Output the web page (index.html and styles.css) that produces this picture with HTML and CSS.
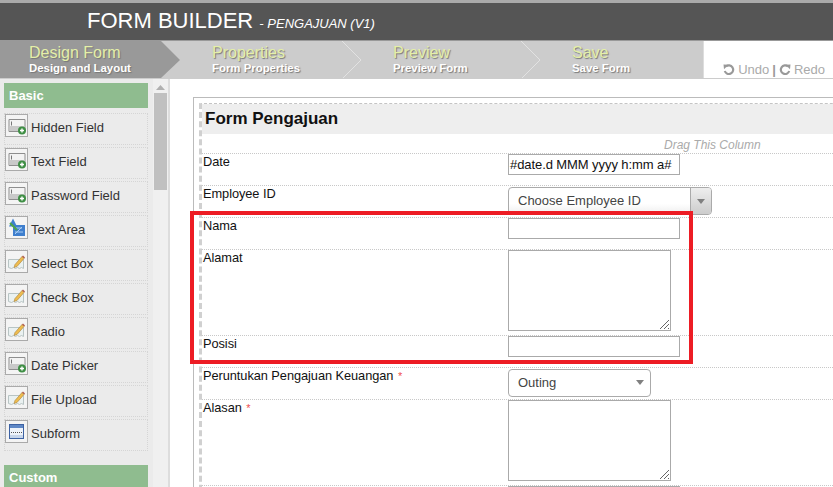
FILE: index.html
```html
<!DOCTYPE html>
<html lang="id">
<head>
<meta charset="utf-8">
<title>Form Builder</title>
<link rel="stylesheet" href="styles.css">
</head>
<body>
<svg class="defs" width="0" height="0" aria-hidden="true">
  <symbol id="i-field" viewBox="0 0 21 21">
    <path d="M3 4.500h16v12H3z" fill="#f3f3f3" stroke="#8e8e8e"/>
    <rect x="3.500" y="11" width="15" height="5" fill="#c9c9c9"/>
    <path d="M5.500 6.500v4" stroke="#777"/>
    <circle cx="16" cy="15.500" r="4" fill="#3f8f45"/>
    <path d="M14 15.500h4M16 13.500v4" stroke="#fff" stroke-width="1.400"/>
  </symbol>
  <symbol id="i-area" viewBox="0 0 21 21">
    <path d="M7 1.500l4 8H3z" fill="#3f7fce"/>
    <rect x="7" y="8" width="12" height="11" fill="#3f7fce"/>
    <path d="M9 17l7-7M10 11h6M9 15h8" stroke="#a9cdf3"/>
    <path d="M4 6l7 7" stroke="#4fa64a" stroke-width="2"/>
  </symbol>
  <symbol id="i-edit" viewBox="0 0 21 21">
    <path d="M2.500 8.500h15v9l-2-1-2 1-2-1-2 1-2-1-2 1-3-1z" fill="#eaf1f1" stroke="#b8c4c4"/>
    <path d="M9 13.500l7-8 2 2-7 8-3 1z" fill="#eebc4f" stroke="#a8823a" stroke-width=".6"/>
    <path d="M16 5.500l1-1 2 2-1 1z" fill="#b05a4a"/>
  </symbol>
  <symbol id="i-sub" viewBox="0 0 21 21">
    <rect x="3.500" y="3.500" width="14" height="14" fill="#eef3fa" stroke="#3d62a3"/>
    <rect x="4" y="4" width="13" height="3" fill="#5f88c6"/>
    <path d="M5 11.500h11" stroke="#555" stroke-dasharray="1 1"/>
    <rect x="4" y="14" width="13" height="3" fill="#c6d5ea"/>
  </symbol>
</svg>
<header class="title-bar">
  <h1 class="title">FORM BUILDER <small class="subtitle">- PENGAJUAN (V1)</small></h1>
</header>
<nav class="steps">
  <div class="step step-active step-a"><span class="step-title">Design Form</span><span class="step-sub">Design and Layout</span>
    <svg class="arrow arrow-active" width="19" height="37" viewBox="0 0 19 37"><path d="M0 0L19 19 0 37z" fill="#999"/></svg></div>
  <div class="step step-b"><span class="step-title">Properties</span><span class="step-sub">Form Properties</span>
    <svg class="arrow" width="20" height="37" viewBox="0 0 20 37"><path d="M0 0L19 19 1 37" fill="none" stroke="#e2e2e2"/></svg></div>
  <div class="step step-c"><span class="step-title">Preview</span><span class="step-sub">Preview Form</span>
    <svg class="arrow" width="20" height="37" viewBox="0 0 20 37"><path d="M0 0L19 19 1 37" fill="none" stroke="#e2e2e2"/></svg></div>
  <div class="step step-d"><span class="step-title">Save</span><span class="step-sub">Save Form</span></div>
  <div class="history">
    <svg width="12" height="12" viewBox="0 0 12 12"><path d="M3 2.500A4.300 4.300 0 1 1 1.800 7" fill="none" stroke="#999" stroke-width="2.200"/><path d="M.5 .5l5 .3L1 5.300z" fill="#999"/></svg>
    <span>Undo</span><b class="sep">|</b>
    <svg width="12" height="12" viewBox="0 0 12 12"><path d="M9 2.500A4.300 4.300 0 1 0 10.200 7" fill="none" stroke="#999" stroke-width="2.200"/><path d="M11.500 .5l-5 .3 4.500 4.500z" fill="#999"/></svg>
    <span>Redo</span>
  </div>
</nav>
<main class="workspace">
  <aside class="palette">
    <h2 class="group">Basic</h2>
    <div class="tool"><svg class="tool-icon"><use href="#i-field"/></svg>Hidden Field</div>
    <div class="tool"><svg class="tool-icon"><use href="#i-field"/></svg>Text Field</div>
    <div class="tool"><svg class="tool-icon"><use href="#i-field"/></svg>Password Field</div>
    <div class="tool"><svg class="tool-icon"><use href="#i-area"/></svg>Text Area</div>
    <div class="tool"><svg class="tool-icon"><use href="#i-edit"/></svg>Select Box</div>
    <div class="tool"><svg class="tool-icon"><use href="#i-edit"/></svg>Check Box</div>
    <div class="tool"><svg class="tool-icon"><use href="#i-edit"/></svg>Radio</div>
    <div class="tool"><svg class="tool-icon"><use href="#i-field"/></svg>Date Picker</div>
    <div class="tool"><svg class="tool-icon"><use href="#i-edit"/></svg>File Upload</div>
    <div class="tool"><svg class="tool-icon"><use href="#i-sub"/></svg>Subform</div>
    <h2 class="group group-custom">Custom</h2>
  </aside>
  <div class="scrollbar">
    <svg class="scroll-up" width="9" height="5" viewBox="0 0 9 5"><path d="M4.500 0L9 5H0z" fill="#b0b0b0"/></svg>
    <div class="thumb"></div>
  </div>
  <section class="canvas">
    <div class="form-outer">
      <div class="form-inner">
        <h2 class="form-title">Form Pengajuan</h2>
        <div class="drag-hint">Drag This Column</div>
        <div class="row row-32"><label class="lbl">Date</label><div class="input w172 value">#date.d MMM yyyy h:mm a#</div></div>
        <div class="row row-32"><label class="lbl">Employee ID</label>
          <div class="combo"><span class="combo-text">Choose Employee ID</span><span class="combo-btn"><i class="caret"></i></span></div></div>
        <div class="row row-32"><label class="lbl">Nama</label><div class="input w172"></div></div>
        <div class="row row-86"><label class="lbl">Alamat</label><div class="textarea"><svg class="grip" width="9" height="9" viewBox="0 0 9 9"><path d="M0 9L9 0M4 9l5-5M8 9l1-1" stroke="#666"/></svg></div></div>
        <div class="row row-32"><label class="lbl">Posisi</label><div class="input w172"></div></div>
        <div class="row row-32"><label class="lbl">Peruntukan Pengajuan Keuangan <em class="req">*</em></label>
          <div class="select-plain"><span>Outing</span><i class="caret"></i></div></div>
        <div class="row row-86"><label class="lbl">Alasan <em class="req">*</em></label><div class="textarea"><svg class="grip" width="9" height="9" viewBox="0 0 9 9"><path d="M0 9L9 0M4 9l5-5M8 9l1-1" stroke="#666"/></svg></div></div>
        <div class="row row-32"><label class="lbl"></label><div class="input w172"></div></div>
      </div>
    </div>
  </section>
</main>
<div class="highlight"></div>
</body>
</html>
```
FILE: styles.css
```css
* { box-sizing: border-box; }
html, body { margin: 0; height: 100%; overflow: hidden; }
body { font-family: "Liberation Sans", Arial, sans-serif; font-size: 12px; color: #222; background: #fff; position: relative; display: flex; flex-direction: column; height: 487px; }
.defs { position: absolute; }

.title-bar { height: 41px; flex: none; background: #555; border-top: 3px solid #aaa; border-bottom: 1px solid #999; padding-left: 87px; }
.title { margin: 0; font-size: 22px; font-weight: 400; line-height: 32px; padding-top: 2px; color: #fff; white-space: nowrap; }
.subtitle { font-size: 13px; font-style: italic; }

.steps { height: 38px; flex: none; display: flex; background: #ccc; border-bottom: 1px solid #ccc; }
.step { position: relative; padding: 3px 0 0 29px; display: flex; flex-direction: column; color: #fff; text-shadow: 1px 1px 1px #777; }
.step-a { width: 161px; background: #999; margin-right: 22px; }
.step-b { width: 159px; margin-right: 22px; }
.step-c { width: 157px; margin-right: 22px; }
.step-d { width: 160px; }
.step-title { font-size: 16px; line-height: 18px; color: #e4efa8; }
.step-sub { font-size: 11.400px; line-height: 13px; font-weight: 700; color: #fff; }
.arrow { position: absolute; top: 0; left: 100%; }
.history { flex: 1; background: #fff; border-left: 1px solid #ddd; display: flex; align-items: center; justify-content: flex-end; gap: 3px; padding: 20px 8px 0 0; color: #aaa; font-size: 13px; }
.sep { color: #999; }

.workspace { flex: 1; display: flex; min-height: 0; }
.palette { width: 153px; flex: none; background: #ebebeb; padding: 4px 5px 0 4px; overflow: hidden; }
.group { margin: 0 0 5px; height: 25px; background: #8fbc8f; color: #fff; font-size: 13px; line-height: 25px; padding-left: 5px; }
.group-custom { margin: 14px 0 0; }
.tool { height: 32px; margin: 0 0 2px; border: 1px dotted #d5d5d5; display: flex; align-items: flex-start; gap: 3px; font-size: 13px; line-height: 28px; color: #333; }
.tool-icon { width: 23px; height: 23px; flex: none; border: 1px solid #aaa; background: #f4f4f4; }

.scrollbar { width: 15px; flex: none; background: #f0f0f0; padding: 6px 1px 0; display: flex; flex-direction: column; align-items: center; gap: 3px; }
.thumb { width: 13px; height: 97px; background: #c0c0c0; }

.canvas { flex: 1; min-width: 0; border-left: 2px solid #ddd; padding: 18px 0 0 23px; overflow: hidden; }
.form-outer { border: 1px solid #bbb; border-right: 0; border-bottom: 0; padding: 5px 0 0 5px; width: 800px; height: 500px; }
.form-inner { border: 1px dashed #c4c4c4; border-left: 3px dashed #d0d0d0; border-right: 0; }
.form-title { margin: 0; height: 30px; background: #eee; font-size: 17px; line-height: 29px; padding-left: 3px; color: #111; }
.drag-hint { height: 19px; padding: 4px 0 0 462px; font-size: 12px; font-style: italic; color: #aaa; white-space: nowrap; }
.row { border-top: 1px dotted #c8c8c8; display: flex; align-items: flex-start; }
.row-32 { height: 32px; }
.row-86 { height: 86px; }
.lbl { width: 306px; flex: none; padding: 0 0 0 1px; line-height: 15px; font-size: 12.800px; letter-spacing: -.06px; color: #111; }
.req { font-style: normal; color: #f05050; font-size: 11px; margin-left: 1px; }
.input { height: 21px; border: 1px solid #aaa; background: #fff; }
.w172 { width: 172px; }
.value { font-size: 13px; letter-spacing: -.08px; line-height: 19px; padding-left: 1px; white-space: nowrap; color: #111; overflow: hidden; }
.combo { width: 204px; height: 28px; display: flex; border: 1px solid #aaa; border-radius: 4px; overflow: hidden; margin-top: 1px; background: linear-gradient(#fff 60%, #eee); }
.combo-text { flex: 1; padding-left: 9px; line-height: 26px; font-size: 13px; color: #444; }
.combo-btn { width: 21px; border-left: 1px solid #aaa; background: linear-gradient(#eee, #ccc); display: flex; align-items: center; justify-content: center; }
.caret { display: block; width: 0; height: 0; border: 4px solid transparent; border-top: 5px solid #808080; border-bottom: 0; }
.textarea { position: relative; width: 163px; height: 81px; border: 1px solid #aaa; background: #fff; }
.grip { position: absolute; right: 1px; bottom: 1px; }
.select-plain { width: 143px; height: 28px; margin-top: 1px; border: 1px solid #aaa; border-radius: 4px; display: flex; align-items: center; justify-content: space-between; padding: 0 6px 2px 9px; font-size: 13px; color: #444; background: #fff; }

.highlight { position: absolute; left: 190px; top: 211px; width: 503px; height: 153px; border: 4px solid #ed1c24; pointer-events: none; }
```
